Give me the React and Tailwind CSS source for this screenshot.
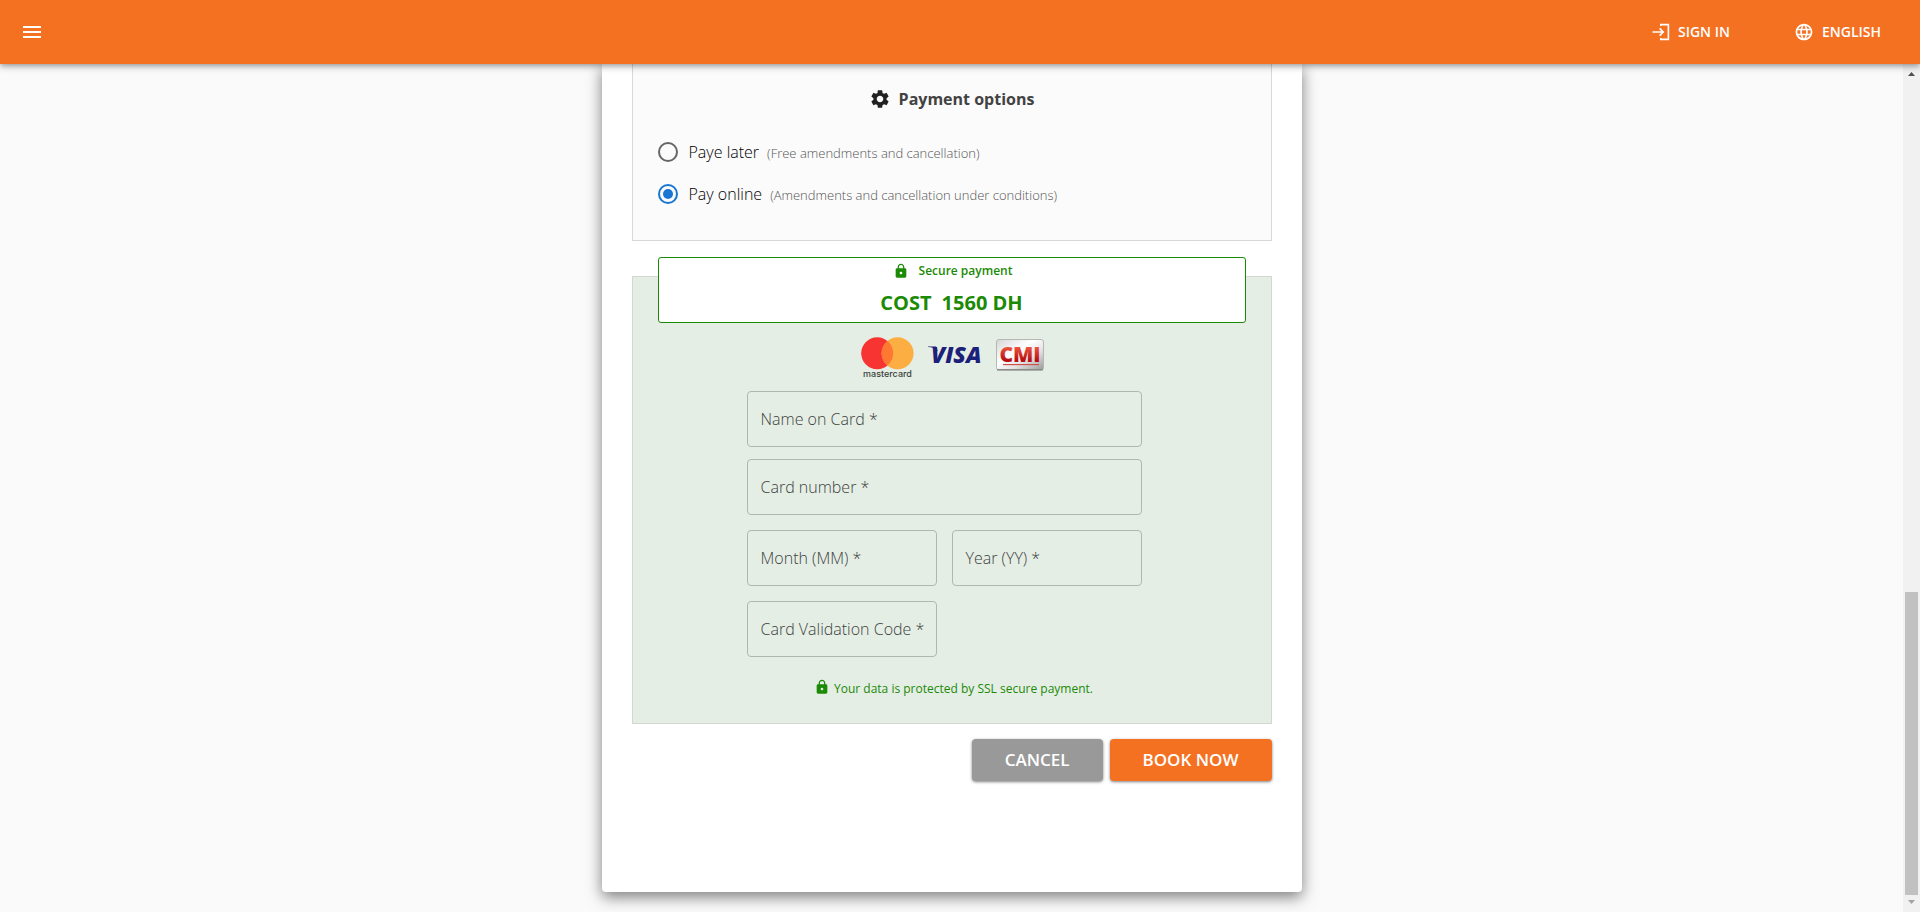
import { MdMenu, MdLanguage, MdLock, MdSettings } from "react-icons/md";

function LoginIcon() {
  return (
    <svg viewBox="0 0 18 18" className="size-[18px]" fill="none" stroke="currentColor" strokeWidth="1.6" aria-hidden="true">
      <path d="M8.800 3V1.600h7.600v14.800H8.800V15" />
      <path d="M0.500 9h10.500M7.600 5.400L11.200 9l-3.600 3.600" />
    </svg>
  );
}

function Header() {
  return (
    <header className="z-10 flex h-16 shrink-0 items-center justify-between bg-[#f57122] pl-5 pr-[39px] text-white shadow-[0_2px_4px_-1px_rgba(0,0,0,0.2),0_4px_5px_0_rgba(0,0,0,0.14),0_1px_10px_0_rgba(0,0,0,0.12)]">
      <button type="button" aria-label="Menu">
        <MdMenu className="size-6" />
      </button>
      <nav className="flex items-center gap-16">
        <a href="#sign-in" className="flex items-center gap-2 text-sm font-semibold">
          <LoginIcon />
          SIGN IN
        </a>
        <button type="button" className="flex items-center gap-2 text-sm font-semibold">
          <MdLanguage className="size-5" />
          ENGLISH
        </button>
      </nav>
    </header>
  );
}

function PaymentOption({ id, label, note, checked }) {
  return (
    <div className="flex h-[42px] items-center">
      <input
        type="radio"
        id={id}
        name="payment"
        defaultChecked={checked}
        className="size-5 appearance-none rounded-full border-2 border-[#666] bg-clip-content p-[3px] checked:border-[#1976d2] checked:bg-[#1976d2]"
      />
      <label htmlFor={id} className="flex items-baseline gap-2 pl-[11px] text-base font-light text-black">
        {label}
        <span className="text-[13px] text-[#555]">{note}</span>
      </label>
    </div>
  );
}

function Field({ id, label }) {
  return (
    <div className="relative h-14">
      <input
        id={id}
        type="text"
        placeholder=" "
        className="peer h-full w-full rounded border border-[#b0b7b1] bg-transparent px-3.5 text-base outline-none focus:border-[#1976d2]"
      />
      <label
        htmlFor={id}
        className="pointer-events-none absolute inset-y-0 left-3.5 hidden items-center whitespace-nowrap text-base font-light text-[#3c423d] peer-placeholder-shown:flex"
      >
        {label} *
      </label>
    </div>
  );
}

function Mastercard() {
  return (
    <svg viewBox="0 0 53 42" className="h-[42px] w-[53px]" role="img" aria-label="mastercard">
      <circle cx="16.2" cy="16.2" r="16" fill="#f73431" />
      <circle cx="36.6" cy="16.2" r="16" fill="#fdae42" />
      <path d="M26.4 3.9a16 16 0 0 1 0 24.6 16 16 0 0 1 0-24.6z" fill="#ff7832" />
      <text x="26.5" y="39.5" textAnchor="middle" fontFamily="Inter, sans-serif" fontWeight="500" fontSize="9" fill="#3a3f3a">
        mastercard
      </text>
    </svg>
  );
}

function Visa() {
  return (
    <svg viewBox="0 0 54 20" className="h-5 w-[54px] overflow-visible" role="img" aria-label="VISA">
      <path d="M0 1.500h8l2 5C7 3.300 4 2.200 0 2z" fill="#1c2079" />
      <text x="3" y="18" fontFamily="'Open Sans', sans-serif" fontStyle="italic" fontWeight="800" fontSize="23" fill="#1c2079">
        VISA
      </text>
    </svg>
  );
}

function Cmi() {
  return (
    <svg viewBox="0 0 48 32" className="h-8 w-12" role="img" aria-label="CMI">
      <defs>
        <linearGradient id="cmi-plate" x1="0" y1="0" x2="1" y2="1">
          <stop offset="0" stopColor="#d5d5d5" />
          <stop offset="0.4" stopColor="#ffffff" />
          <stop offset="0.65" stopColor="#e4e4e4" />
          <stop offset="1" stopColor="#999999" />
        </linearGradient>
        <linearGradient id="cmi-text" x1="0" y1="0" x2="0" y2="1">
          <stop offset="0.3" stopColor="#e8503c" />
          <stop offset="0.75" stopColor="#b80d12" />
        </linearGradient>
      </defs>
      <rect x="0.5" y="0.5" width="47" height="30.500" rx="2.500" fill="url(#cmi-plate)" stroke="#b4b7b4" />
      <path d="M1 30.800h46" stroke="#8a8c8a" strokeWidth="1.400" />
      <text x="24" y="22.5" textAnchor="middle" fontFamily="'Open Sans', sans-serif" fontWeight="800" fontSize="21" fill="url(#cmi-text)">
        CMI
      </text>
      <rect x="7" y="25" width="36" height="1.200" fill="#d0504c" />
    </svg>
  );
}

function PaymentForm() {
  return (
    <section className="mt-[35px] border border-[#d3d7d3] bg-[#e5eee5] px-[25px] pb-5">
      <div className="-mt-5 h-[66px] rounded-[3px] border border-[#1b8a05] bg-white text-center text-[#1b8a05]">
        <p className="flex h-[26px] items-center justify-center gap-2.5 pl-0.5 text-xs font-semibold">
          <MdLock className="size-4" />
          Secure payment
        </p>
        <p className="flex h-[38px] items-center justify-center gap-2.5 text-xl font-bold">
          <span>COST</span>
          <span>1560 DH</span>
        </p>
      </div>
      <div className="mt-3.5 flex items-start justify-center gap-3.5 pl-0.5">
        <Mastercard />
        <div className="flex h-9 items-center gap-3.5">
          <Visa />
          <Cmi />
        </div>
      </div>
      <form className="ml-[89px] mr-[104px] mt-3 flex flex-col gap-[15px]">
        <div className="flex flex-col gap-3">
          <Field id="card-name" label="Name on Card" />
          <Field id="card-number" label="Card number" />
        </div>
        <div className="grid grid-cols-2 gap-[15px]">
          <Field id="card-month" label="Month (MM)" />
          <Field id="card-year" label="Year (YY)" />
          <Field id="card-code" label="Card Validation Code" />
        </div>
      </form>
      <p className="mb-0.5 mt-5 flex h-6 items-center justify-center gap-1 pl-1 text-xs text-[#1b8a05]">
        <MdLock className="mb-1 size-4" />
        Your data is protected by SSL secure payment.
      </p>
    </section>
  );
}

function Scrollbar() {
  return (
    <div aria-hidden="true" className="flex w-[17px] shrink-0 flex-col items-center justify-between bg-[#f1f1f1] py-2">
      <svg viewBox="0 0 7 4" className="h-1 w-[7px]">
        <path d="M0 4h7L3.500 0z" fill="#505050" />
      </svg>
      <div className="flex w-[13px] flex-1 flex-col justify-end pb-[5px]">
        <div className="h-[37%] bg-[#c1c1c1]" />
      </div>
      <svg viewBox="0 0 7 4" className="h-1 w-[7px]">
        <path d="M0 0h7L3.500 4z" fill="#a3a3a3" />
      </svg>
    </div>
  );
}

export default function App() {
  return (
    <div className="flex h-screen flex-col bg-[#fafafa] font-['Open_Sans','Noto_Sans',sans-serif]">
      <Header />
      <div className="flex min-h-0 flex-1">
        <main className="flex flex-1 justify-center overflow-hidden pb-5">
          <div className="w-full max-w-[700px] rounded-b bg-white px-[30px] shadow-[0_5px_15px_rgba(0,0,0,0.5)]">
            <section className="border border-t-0 border-[#d8d8d8] bg-[#fbfbfb] px-[25px] pb-[25px] pt-[19px]">
              <h2 className="mb-4 flex h-8 items-center justify-center gap-2 text-base font-bold text-[#424242]">
                <MdSettings className="size-[22px] text-[#212121]" />
                Payment options
              </h2>
              <PaymentOption id="pay-later" label="Paye later" note="(Free amendments and cancellation)" />
              <PaymentOption id="pay-online" label="Pay online" note="(Amendments and cancellation under conditions)" checked />
            </section>
            <PaymentForm />
            <div className="mt-[15px] flex justify-end gap-[7px] text-[17px] font-semibold text-white">
              <button type="button" className="h-[42px] rounded bg-[#999] px-[33px] shadow-[0_1px_3px_rgba(0,0,0,0.5)]">
                CANCEL
              </button>
              <button type="button" className="h-[42px] rounded bg-[#f57122] px-[33px] shadow-[0_1px_3px_rgba(0,0,0,0.5)]">
                BOOK NOW
              </button>
            </div>
          </div>
        </main>
        <Scrollbar />
      </div>
    </div>
  );
}
